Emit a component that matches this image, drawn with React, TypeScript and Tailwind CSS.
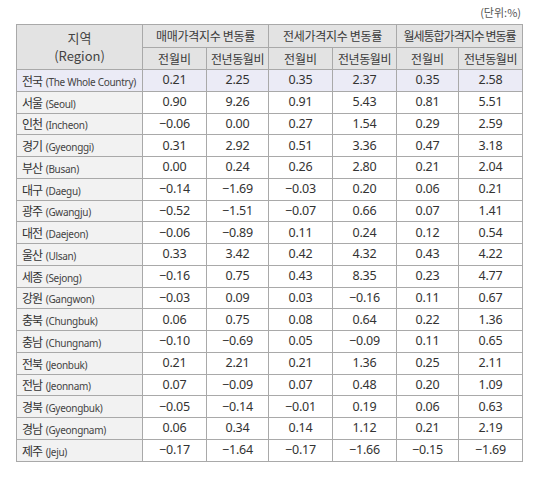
import React from "react";

type Row = { ko: string; en: string; v: string[]; total?: boolean };

const rows: Row[] = [
  { ko: "전국", en: "(The Whole Country)", v: ["0.21", "2.25", "0.35", "2.37", "0.35", "2.58"], total: true },
  { ko: "서울", en: "(Seoul)", v: ["0.90", "9.26", "0.91", "5.43", "0.81", "5.51"] },
  { ko: "인천", en: "(Incheon)", v: ["−0.06", "0.00", "0.27", "1.54", "0.29", "2.59"] },
  { ko: "경기", en: "(Gyeonggi)", v: ["0.31", "2.92", "0.51", "3.36", "0.47", "3.18"] },
  { ko: "부산", en: "(Busan)", v: ["0.00", "0.24", "0.26", "2.80", "0.21", "2.04"] },
  { ko: "대구", en: "(Daegu)", v: ["−0.14", "−1.69", "−0.03", "0.20", "0.06", "0.21"] },
  { ko: "광주", en: "(Gwangju)", v: ["−0.52", "−1.51", "−0.07", "0.66", "0.07", "1.41"] },
  { ko: "대전", en: "(Daejeon)", v: ["−0.06", "−0.89", "0.11", "0.24", "0.12", "0.54"] },
  { ko: "울산", en: "(Ulsan)", v: ["0.33", "3.42", "0.42", "4.32", "0.43", "4.22"] },
  { ko: "세종", en: "(Sejong)", v: ["−0.16", "0.75", "0.43", "8.35", "0.23", "4.77"] },
  { ko: "강원", en: "(Gangwon)", v: ["−0.03", "0.09", "0.03", "−0.16", "0.11", "0.67"] },
  { ko: "충북", en: "(Chungbuk)", v: ["0.06", "0.75", "0.08", "0.64", "0.22", "1.36"] },
  { ko: "충남", en: "(Chungnam)", v: ["−0.10", "−0.69", "0.05", "−0.09", "0.11", "0.65"] },
  { ko: "전북", en: "(Jeonbuk)", v: ["0.21", "2.21", "0.21", "1.36", "0.25", "2.11"] },
  { ko: "전남", en: "(Jeonnam)", v: ["0.07", "−0.09", "0.07", "0.48", "0.20", "1.09"] },
  { ko: "경북", en: "(Gyeongbuk)", v: ["−0.05", "−0.14", "−0.01", "0.19", "0.06", "0.63"] },
  { ko: "경남", en: "(Gyeongnam)", v: ["0.06", "0.34", "0.14", "1.12", "0.21", "2.19"] },
  { ko: "제주", en: "(Jeju)", v: ["−0.17", "−1.64", "−0.17", "−1.66", "−0.15", "−1.69"] },
];

const groups = [
  { label: "매매가격지수 변동률", track: "tracking-[-0.3px]" },
  { label: "전세가격지수 변동률", track: "tracking-[-0.3px]" },
  { label: "월세통합가격지수 변동률", track: "tracking-[-1px]" },
];
const widths = ["w-[126px]", "w-[64px]", "w-[62px]", "w-[64px]", "w-[64px]", "w-[62px]", "w-[64px]"];

const cell = "border border-[#a9a9a9] p-0 overflow-hidden whitespace-nowrap";

export default function App() {
  return (
    <div
      className="w-[539px] h-[477px] bg-white pl-4 text-[#3a3a3a] leading-none"
      style={{ fontFamily: '"Noto Sans CJK KR", "Noto Sans", sans-serif' }}
    >
      <div className="h-6 w-[506px] flex items-center justify-end pr-[1px] text-[11px] text-[#555]">
        (단위:%)
      </div>
      <table className="w-[506px] border-collapse table-fixed">
        <colgroup>
          {widths.map((w, i) => (
            <col key={i} className={w} />
          ))}
        </colgroup>
        <thead>
          <tr className="h-[23px] bg-[#e3e3e3]">
            <th rowSpan={2} className={`${cell} font-normal text-[13px] leading-[18px] text-[#444]`}>
              <div>지역</div>
              <div>(Region)</div>
            </th>
            {groups.map((g) => (
              <th
                key={g.label}
                colSpan={2}
                className={`${cell} font-normal text-[12px] leading-[16px] ${g.track}`}
              >
                {g.label}
              </th>
            ))}
          </tr>
          <tr className="h-[22px] bg-[#e3e3e3]">
            {groups.map((g) => (
              <React.Fragment key={g.label}>
                <th className={`${cell} font-normal text-[12px] leading-[16px]`}>전월비</th>
                <th className={`${cell} font-normal text-[12px] leading-[16px] tracking-[-0.4px]`}>
                  전년동월비
                </th>
              </React.Fragment>
            ))}
          </tr>
        </thead>
        <tbody>
          {rows.map((r) => (
            <tr key={r.ko} className={`h-[21.75px] ${r.total ? "bg-[#ebebf6]" : "bg-white"}`}>
              <td className={`${cell} pl-[5px] leading-[16px] ${r.total ? "" : "bg-[#f2f2f2]"}`}>
                <span className="text-[12px] leading-[16px] tracking-[-1px] text-[#333]">{r.ko}</span>{" "}
                <span
                  className="text-[10px] leading-[16px] tracking-[-0.3px] text-[#444]"
                  style={{ fontFamily: '"Noto Sans", sans-serif' }}
                >
                  {r.en}
                </span>
              </td>
              {r.v.map((v, i) => (
                <td
                  key={i}
                  className={`${cell} text-center text-[12.5px] leading-[16px] tracking-[-0.2px] text-[#333]`}
                  style={{ fontFamily: '"Noto Sans", sans-serif' }}
                >
                  {v}
                </td>
              ))}
            </tr>
          ))}
        </tbody>
      </table>
    </div>
  );
}
